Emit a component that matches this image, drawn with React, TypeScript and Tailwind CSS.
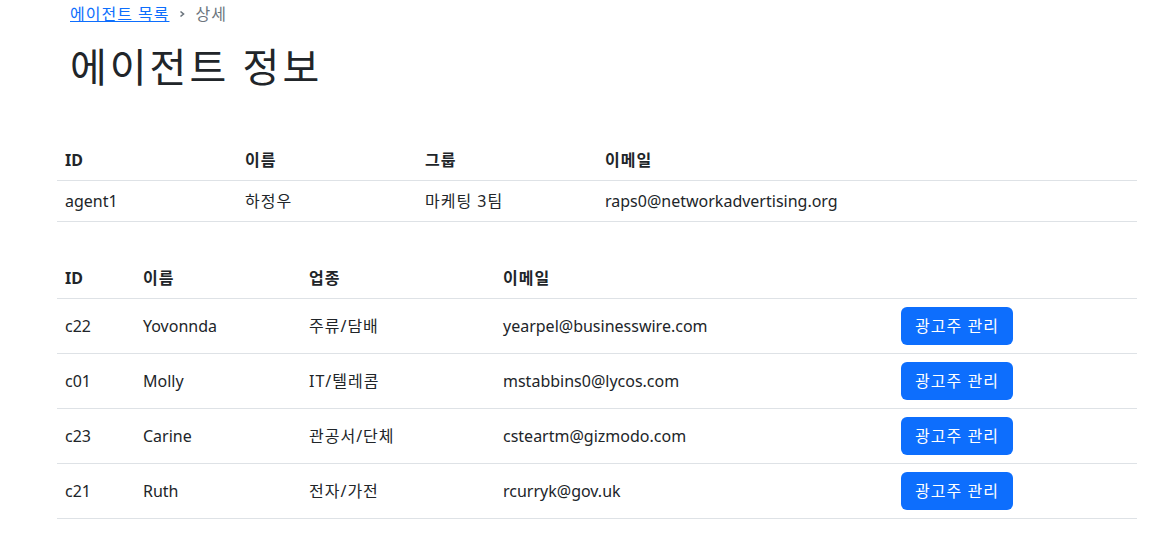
import React from 'react';

const agent = { id: 'agent1', name: '하정우', group: '마케팅 3팀', email: 'raps0@networkadvertising.org' };

const clients = [
  { id: 'c22', name: 'Yovonnda', industry: '주류/담배', email: 'yearpel@businesswire.com' },
  { id: 'c01', name: 'Molly', industry: 'IT/텔레콤', email: 'mstabbins0@lycos.com' },
  { id: 'c23', name: 'Carine', industry: '관공서/단체', email: 'csteartm@gizmodo.com' },
  { id: 'c21', name: 'Ruth', industry: '전자/가전', email: 'rcurryk@gov.uk' },
];

const font = { fontFamily: '"Noto Sans", "Noto Sans CJK KR", sans-serif' };

const AgentDetail: React.FC = () => {
  return (
    <div className="bg-white text-[#212529] text-base min-h-screen" style={font}>
      <div className="pl-[70px] pt-[2px]">
        <nav className="flex items-center gap-[9px] leading-6 tracking-[1px]">
          <a href="#" className="text-[#0d6efd] underline">에이전트 목록</a>
          <svg width="8" height="8" viewBox="0 0 8 8" className="text-[#6c757d]">
            <path d="M2.5 1.5 L5.5 4 L2.5 6.5" fill="none" stroke="currentColor" strokeWidth="1.6" />
          </svg>
          <span className="text-[#6c757d]">상세</span>
        </nav>
        <h1 className="mt-[17px] text-[40px] leading-[48px] font-normal tracking-[3px]">에이전트 정보</h1>
      </div>

      <div className="ml-[57px] w-[1080px] mt-[49px]">
        <table className="w-full table-fixed border-collapse text-left">
          <thead>
            <tr className="border-b border-[#dee2e6]">
              <th className="w-[180px] px-2 py-2 font-bold">ID</th>
              <th className="w-[180px] px-2 py-2 font-bold tracking-[1px]">이름</th>
              <th className="w-[180px] px-2 py-2 font-bold tracking-[1px]">그룹</th>
              <th className="px-2 py-2 font-bold tracking-[1px]">이메일</th>
            </tr>
          </thead>
          <tbody>
            <tr className="border-b border-[#dee2e6]">
              <td className="px-2 py-2">{agent.id}</td>
              <td className="px-2 py-2 tracking-[1px]">{agent.name}</td>
              <td className="px-2 py-2 tracking-[1px]">{agent.group}</td>
              <td className="px-2 py-2">{agent.email}</td>
            </tr>
          </tbody>
        </table>

        <table className="w-full table-fixed border-collapse text-left mt-[36px]">
          <thead>
            <tr className="border-b border-[#dee2e6]">
              <th className="w-[78px] px-2 py-2 font-bold">ID</th>
              <th className="w-[166px] px-2 py-2 font-bold tracking-[1px]">이름</th>
              <th className="w-[194px] px-2 py-2 font-bold tracking-[1px]">업종</th>
              <th className="w-[398px] px-2 py-2 font-bold tracking-[1px]">이메일</th>
              <th className="px-2 py-2"></th>
            </tr>
          </thead>
          <tbody>
            {clients.map((c) => (
              <tr key={c.id} className="border-b border-[#dee2e6]">
                <td className="px-2 py-2">{c.id}</td>
                <td className="px-2 py-2">{c.name}</td>
                <td className="px-2 py-2 tracking-[1px]">{c.industry}</td>
                <td className="px-2 py-2">{c.email}</td>
                <td className="px-2 py-2">
                  <button className="h-[38px] w-[112px] rounded-md bg-[#0d6efd] text-white leading-6 tracking-[1px]">광고주 관리</button>
                </td>
              </tr>
            ))}
          </tbody>
        </table>
      </div>
    </div>
  );
};

export default AgentDetail;
